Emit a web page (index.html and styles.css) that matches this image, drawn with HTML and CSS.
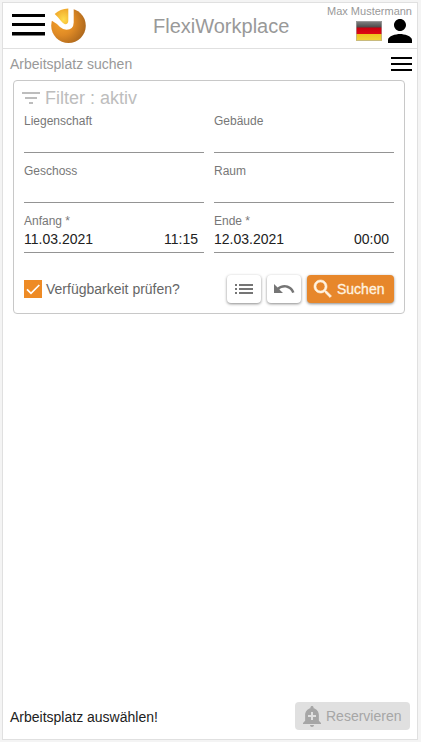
FILE: index.html
```html
<!DOCTYPE html>
<html lang="de">
<head>
<meta charset="utf-8">
<title>FlexiWorkplace</title>
<link rel="stylesheet" href="styles.css">
</head>
<body>
<div class="app">
  <header class="header">
    <div class="brand">
      <svg class="menu-icon" viewBox="0 0 33 22"><path d="M0 0h33v3H0zM0 9h33v3H0zM0 18h33v3.500H0z"/></svg>
      <svg class="logo" viewBox="0 0 36 36">
        <defs>
          <radialGradient id="ball" cx=".3" cy=".4" r=".75"><stop offset="0" stop-color="#f6a32b"/><stop offset=".5" stop-color="#df8a25"/><stop offset="1" stop-color="#a9651c"/></radialGradient>
          <radialGradient id="wedge" cx=".65" cy=".7" r=".8"><stop offset="0" stop-color="#ffdc4c"/><stop offset="1" stop-color="#eea126"/></radialGradient>
        </defs>
        <circle cx="17.500" cy="17.700" r="17.300" fill="url(#ball)"/>
        <path d="M-1 11.500L1 4L12-1H22.700V14.500Q22.500 21.700 15.500 21.700Q12 21.500 9 19Q6 15.500 .500 12.500z" fill="#fff"/>
        <path d="M3.700 6Q9 .800 17.300 .400V12.500Q17.300 16.500 14 16.300Q12.500 16 10 13Q7 9 3.700 6z" fill="url(#wedge)"/>
      </svg>
    </div>
    <h1 class="title">FlexiWorkplace</h1>
    <div class="account">
      <span class="user-name">Max Mustermann</span>
      <div class="account-icons">
        <svg class="flag" viewBox="0 0 26 20">
          <defs><linearGradient id="black" x2="0" y2="1"><stop stop-color="#858585"/><stop offset="1" stop-color="#444"/></linearGradient><linearGradient id="red" x2="0" y2="1"><stop stop-color="#c80010"/><stop offset="1" stop-color="#e00914"/></linearGradient><linearGradient id="gold" x2="0" y2="1"><stop stop-color="#edc31f"/><stop offset="1" stop-color="#f5d33c"/></linearGradient></defs>
          <path d="M0 0h26v7H0z" fill="url(#black)"/><path d="M0 6.500h26v7H0z" fill="url(#red)"/><path d="M0 13h26v7H0z" fill="url(#gold)"/><path d="M.5.5h25v19H.5z" fill="none" stroke="#aaa" stroke-opacity=".6"/>
        </svg>
        <svg class="person" viewBox="4 4 16 16"><path d="M12 12c2.210 0 4-1.790 4-4s-1.790-4-4-4-4 1.790-4 4 1.790 4 4 4zm0 2c-2.670 0-8 1.340-8 4v2h16v-2c0-2.660-5.330-4-8-4z"/></svg>
      </div>
    </div>
  </header>
  <div class="subheader">
    <span>Arbeitsplatz suchen</span>
    <svg class="sub-menu" viewBox="0 0 21 14"><path d="M0 0h21v2H0zM0 6h21v2H0zM0 12h21v2H0z"/></svg>
  </div>
  <main class="content">
    <section class="filter">
      <h2 class="filter-title"><svg class="icon" viewBox="0 0 24 24"><path d="M10 18h4v-2h-4v2zM3 6v2h18V6H3zm3 7h12v-2H6v2z"/></svg><span>Filter : aktiv</span></h2>
      <div class="fields">
        <div class="field"><label>Liegenschaft</label><div class="value"></div></div>
        <div class="field"><label>Gebäude</label><div class="value"></div></div>
        <div class="field"><label>Geschoss</label><div class="value"></div></div>
        <div class="field"><label>Raum</label><div class="value"></div></div>
        <div class="field"><label>Anfang *</label><div class="value"><span>11.03.2021</span><span>11:15</span></div></div>
        <div class="field"><label>Ende *</label><div class="value end"><span>12.03.2021</span><span>00:00</span></div></div>
      </div>
      <div class="actions">
        <span class="checkbox"><svg viewBox="0 0 18 18"><path d="M3 9.300l4 4L15.300 5" fill="none" stroke="#fff" stroke-width="1.700"/></svg></span>
        <span class="check-label">Verfügbarkeit prüfen?</span>
        <button class="btn small"><svg class="icon" viewBox="0 0 24 24"><path d="M3 13h2v-2H3v2zm0 4h2v-2H3v2zm0-8h2V7H3v2zm4 4h14v-2H7v2zm0 4h14v-2H7v2zM7 7v2h14V7H7z"/></svg></button>
        <button class="btn small"><svg class="icon" viewBox="0 0 24 24"><path d="M12.500 8c-2.650 0-5.050.99-6.900 2.600L2 7v9h9l-3.620-3.620c1.390-1.160 3.160-1.880 5.120-1.880 3.540 0 6.550 2.310 7.600 5.500l2.370-.78C21.080 11.030 17.150 8 12.500 8z"/></svg></button>
        <button class="btn search"><svg class="icon" viewBox="0 0 24 24"><path d="M15.500 14h-.79l-.28-.27C15.410 12.590 16 11.110 16 9.500 16 5.910 13.090 3 9.500 3S3 5.910 3 9.500 5.910 16 9.500 16c1.610 0 3.090-.59 4.230-1.570l.27.28v.79l5 4.990L20.490 19l-4.990-5zm-6 0C7.010 14 5 11.990 5 9.500S7.010 5 9.500 5 14 7.010 14 9.500 11.990 14 9.500 14z"/></svg><span>Suchen</span></button>
      </div>
    </section>
  </main>
  <footer class="footer">
    <span class="hint">Arbeitsplatz auswählen!</span>
    <button class="btn reserve" disabled><svg class="icon" viewBox="0 0 24 24"><path d="M10.010 21.010c0 1.100.89 1.990 1.990 1.990s1.990-.89 1.990-1.990h-3.980zm8.870-4.190V11c0-3.250-2.250-5.970-5.290-6.690v-.72C13.590 2.710 12.880 2 12 2s-1.590.71-1.590 1.590v.72C7.370 5.030 5.120 7.750 5.120 11v5.820L3 18.940V20h18v-1.060l-2.120-2.120zM16 13.010h-3v3h-2v-3H8V11h3V8h2v3h3v2.010z"/></svg><span>Reservieren</span></button>
  </footer>
</div>
</body>
</html>
```

FILE: styles.css
```css
* { box-sizing: border-box; }

body {
  margin: 0;
  height: 742px;
  padding: 2px 3px 2px 2px;
  overflow: hidden;
  background: #f4f4f4;
  font: 14px/18px "Liberation Sans", Arial, sans-serif;
  color: #212121;
}

svg { display: block; flex: none; }
.icon { width: 24px; height: 24px; fill: currentColor; }

.app {
  display: flex;
  flex-direction: column;
  height: 738px;
  border: 1px solid #e0e0e0;
  background: #fff;
}

.header {
  display: grid;
  grid-template-columns: 150px 1fr 95px;
  height: 46px;
  padding-right: 5px;
  border-bottom: 1px solid #e0e0e0;
}

.brand { display: flex; padding: 5px 0 0 9px; }
.menu-icon { width: 33px; height: 22px; margin: 6px 6px 0 0; }
.logo { width: 36px; height: 36px; }

.title {
  margin: 0;
  padding-top: 11px;
  font-size: 20px;
  font-weight: 400;
  line-height: 24px;
  white-space: nowrap;
  color: #999;
}

.account { display: flex; flex-direction: column; align-items: flex-end; }
.user-name { font-size: 11px; line-height: 16px; white-space: nowrap; color: #999; }
.account-icons { display: flex; gap: 6px; }
.flag { width: 26px; height: 20px; margin-top: 2px; }
.person { width: 24px; height: 24px; }

.subheader {
  display: flex;
  justify-content: space-between;
  align-items: center;
  height: 30px;
  padding: 0 5px 0 7px;
  color: #999;
}

.sub-menu { width: 21px; height: 14px; fill: #000; }

.content { flex: 1; padding: 1px 12px 0 10px; }

.filter {
  height: 234px;
  padding: 5px 10px 0;
  border: 1px solid #c8c8c8;
  border-radius: 4px;
}

.filter-title {
  display: flex;
  align-items: center;
  gap: 2px;
  height: 24px;
  margin: 0 0 0 -5px;
  font-size: 18px;
  font-weight: 400;
  color: #bdbdbd;
}

.fields { display: grid; grid-template-columns: 180px 180px; column-gap: 10px; }
.field { height: 50px; padding-top: 3px; }
.field label { display: block; height: 16px; font-size: 12px; line-height: 16px; color: #777; }

.value {
  display: flex;
  justify-content: space-between;
  height: 24px;
  padding: 1px 6px 0 0;
  border-bottom: 1px solid #949494;
}

.value.end { padding-right: 5px; }

.actions { display: flex; align-items: center; height: 28px; margin-top: 15px; }
.checkbox { width: 18px; height: 18px; background: #ee8b25; }
.check-label { flex: 1; margin-left: 4px; white-space: nowrap; color: #666; }

.btn {
  display: flex;
  align-items: center;
  justify-content: center;
  height: 28px;
  padding: 0;
  border: 0;
  border-radius: 4px;
  background: #fff;
  color: #757575;
  font: inherit;
  box-shadow: 0 1px 3px #0007;
}

.small { width: 34px; margin-right: 6px; }

.search {
  justify-content: flex-start;
  width: 87px;
  padding-left: 4px;
  gap: 2px;
  background: #e7872b;
  color: #fff3e0;
  -webkit-text-stroke: .3px #fff3e0;
}

.search .icon { stroke: currentColor; stroke-width: .6; }

.footer {
  display: flex;
  align-items: center;
  justify-content: space-between;
  height: 47px;
  padding: 0 7px;
}

.hint { padding-top: 2px; }

.reserve {
  justify-content: flex-start;
  width: 115px;
  padding-left: 5px;
  gap: 2px;
  background: #e0e0e0;
  color: #a6a6a6;
  box-shadow: none;
}
```
